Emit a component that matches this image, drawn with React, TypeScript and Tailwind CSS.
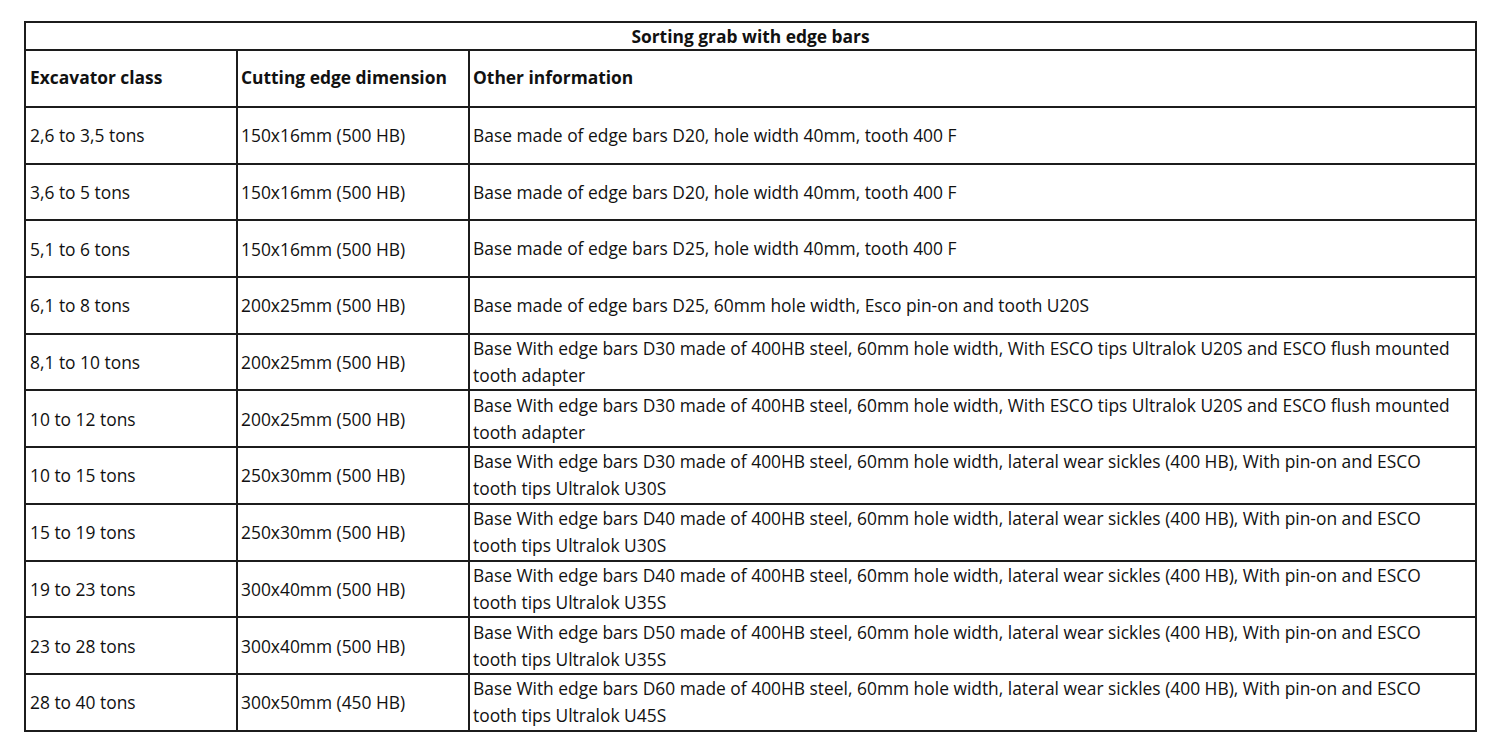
const rows: { cls: string; edge: string; info: string[] }[] = [
  { cls: '2,6 to 3,5 tons', edge: '150x16mm (500 HB)', info: ['Base made of edge bars D20, hole width 40mm, tooth 400 F'] },
  { cls: '3,6 to 5 tons', edge: '150x16mm (500 HB)', info: ['Base made of edge bars D20, hole width 40mm, tooth 400 F'] },
  { cls: '5,1 to 6 tons', edge: '150x16mm (500 HB)', info: ['Base made of edge bars D25, hole width 40mm, tooth 400 F'] },
  { cls: '6,1 to 8 tons', edge: '200x25mm (500 HB)', info: ['Base made of edge bars D25, 60mm hole width, Esco pin-on and tooth U20S'] },
  {
    cls: '8,1 to 10 tons',
    edge: '200x25mm (500 HB)',
    info: ['Base With edge bars D30 made of 400HB steel, 60mm hole width, With ESCO tips Ultralok U20S and ESCO flush mounted', 'tooth adapter'],
  },
  {
    cls: '10 to 12 tons',
    edge: '200x25mm (500 HB)',
    info: ['Base With edge bars D30 made of 400HB steel, 60mm hole width, With ESCO tips Ultralok U20S and ESCO flush mounted', 'tooth adapter'],
  },
  {
    cls: '10 to 15 tons',
    edge: '250x30mm (500 HB)',
    info: ['Base With edge bars D30 made of 400HB steel, 60mm hole width, lateral wear sickles (400 HB), With pin-on and ESCO', 'tooth tips Ultralok U30S'],
  },
  {
    cls: '15 to 19 tons',
    edge: '250x30mm (500 HB)',
    info: ['Base With edge bars D40 made of 400HB steel, 60mm hole width, lateral wear sickles (400 HB), With pin-on and ESCO', 'tooth tips Ultralok U30S'],
  },
  {
    cls: '19 to 23 tons',
    edge: '300x40mm (500 HB)',
    info: ['Base With edge bars D40 made of 400HB steel, 60mm hole width, lateral wear sickles (400 HB), With pin-on and ESCO', 'tooth tips Ultralok U35S'],
  },
  {
    cls: '23 to 28 tons',
    edge: '300x40mm (500 HB)',
    info: ['Base With edge bars D50 made of 400HB steel, 60mm hole width, lateral wear sickles (400 HB), With pin-on and ESCO', 'tooth tips Ultralok U35S'],
  },
  {
    cls: '28 to 40 tons',
    edge: '300x50mm (450 HB)',
    info: ['Base With edge bars D60 made of 400HB steel, 60mm hole width, lateral wear sickles (400 HB), With pin-on and ESCO', 'tooth tips Ultralok U45S'],
  },
];

// shared cell look: thick dark rule, no default padding
const cell = 'border-2 border-[#1c1c1c] align-middle whitespace-nowrap py-0';

export default function App() {
  return (
    <div className="min-h-screen bg-white pt-[21px] pl-[24px] font-['Open_Sans',sans-serif] text-[17.4px] text-[#111]">
      <table className="border-collapse table-fixed w-[1451px]">
        <colgroup>
          <col className="w-[212px]" />
          <col className="w-[232px]" />
          <col className="w-[1007px]" />
        </colgroup>
        <thead>
          <tr className="h-[28px]">
            <th colSpan={3} className={`${cell} text-center font-bold leading-[24px] pb-[1px]`}>
              Sorting grab with edge bars
            </th>
          </tr>
          <tr className="h-[57px]">
            <th className={`${cell} text-left pl-[4px] pb-[2px] font-bold`}>Excavator class</th>
            <th className={`${cell} text-left pl-[3px] pb-[2px] font-bold`}>Cutting edge dimension</th>
            <th className={`${cell} text-left pl-[3px] pb-[2px] font-bold`}>Other information</th>
          </tr>
        </thead>
        <tbody>
          {rows.map((r, i) => (
            <tr key={i} className="h-[56.7px]">
              <td className={`${cell} text-left pl-[4px] leading-[24px]`}>{r.cls}</td>
              <td className={`${cell} text-left pl-[3px] leading-[24px]`}>{r.edge}</td>
              <td className={`${cell} text-left pl-[3px] leading-[27px]`}>
                {r.info.map((line, j) => (
                  <div key={j}>{line}</div>
                ))}
              </td>
            </tr>
          ))}
        </tbody>
      </table>
    </div>
  );
}
